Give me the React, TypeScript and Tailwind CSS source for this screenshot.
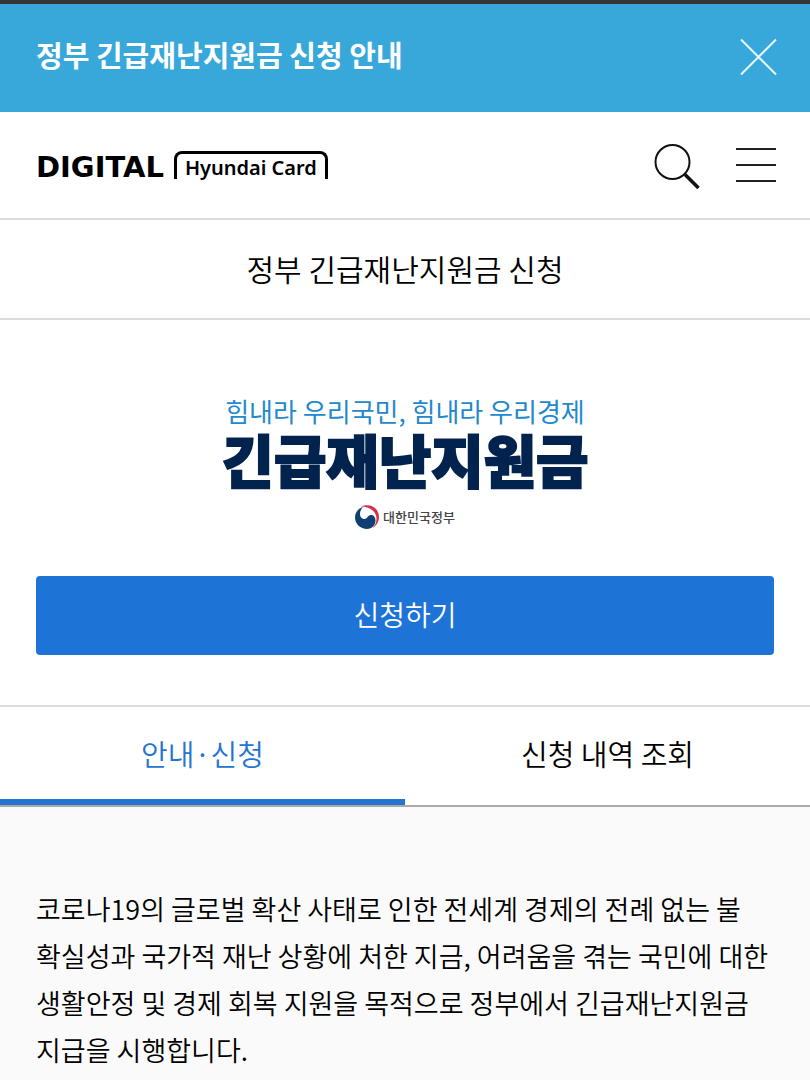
import React from 'react';

interface TabItem {
  label: string;
  href: string;
  active: boolean;
}

const tabs: TabItem[] = [
  { label: '안내·신청', href: '#guide', active: true },
  { label: '신청 내역 조회', href: '#history', active: false },
];

const NoticeBar: React.FC = () => (
  <div className="flex items-center justify-between h-28 pl-9 pr-8 pb-2 bg-[#38a8db] border-t-4 border-[#35363a]">
    <h2 className="text-[29px] leading-10 font-bold text-white">정부 긴급재난지원금 신청 안내</h2>
    <button type="button" aria-label="닫기" className="shrink-0 mt-1">
      <svg className="w-10 h-10" viewBox="0 0 40 40" fill="none" stroke="#e8f8ff" strokeWidth="2">
        <path d="M3 3.5 38 38.5M38 3.5 3 38.5" />
      </svg>
    </button>
  </div>
);

const SiteHeader: React.FC = () => (
  <header className="flex items-center justify-between h-27 px-9 border-b-2 border-[#dcdcdc]">
    <a href="#home" className="flex items-center gap-2.5 text-black">
      <span className="pt-1 font-['DejaVu_Sans',sans-serif] text-[29px] leading-8 font-bold">DIGITAL</span>
      <span className="h-7 px-2 border-3 border-b-0 border-black rounded-t-lg font-['Noto_Sans',sans-serif] text-[20px] leading-7 font-semibold whitespace-nowrap">
        Hyundai Card
      </span>
    </a>
    <div className="flex items-center gap-9 -mr-0.5">
      <button type="button" aria-label="검색">
        <svg className="w-12 h-12" viewBox="0 0 48 48" fill="none" stroke="#111">
          <circle cx="20.5" cy="21" r="17" strokeWidth="2" />
          <path d="M33 33.5 46.5 47" strokeWidth="3.5" />
        </svg>
      </button>
      <button type="button" aria-label="전체 메뉴">
        <svg className="w-10 h-10" viewBox="0 0 40 40" fill="none" stroke="#222" strokeWidth="2">
          <path d="M0 4h40M0 20h40M0 36h40" />
        </svg>
      </button>
    </div>
  </header>
);

const GovernmentMark: React.FC = () => (
  <svg className="w-6 h-6" viewBox="0 0 24 24">
    {/* red crescent, then the blue wave on top */}
    <path d="M6 1.5C15-2.5 24 3 24 12c0 5-3 9-6.500 11C20.500 20 21.500 17 21.500 13.500 21.500 7 15 1.500 6 1.500Z" fill="#d7304a" />
    <path d="M8 2C3 3.500 0 7.500 0 12.500 0 19 5.500 24 12 24c5 0 8.500-4 8.500-8.500 0-3.500-2-5.500-4.500-5.500-3.500 0-3.500 4-6.500 4S5 11.500 5 9c0-3 1.500-5.500 3-7Z" fill="#123f73" />
  </svg>
);

const Hero: React.FC = () => (
  <section className="flex flex-col items-center px-9 pt-[73px] pb-[50px]">
    <p className="text-[26px] leading-9 text-[#2389cc]">힘내라 우리국민, 힘내라 우리경제</p>
    <h2 className="text-[57px] leading-[58px] font-black text-[#03234f] [-webkit-text-stroke:2px_#03234f]">긴급재난지원금</h2>
    <div className="flex items-center gap-1 mt-[18px] text-[13px] leading-6 font-medium text-[#444]">
      <GovernmentMark />
      <span>대한민국정부</span>
    </div>
    <button type="button" className="w-full h-[79px] mt-[47px] pb-1 rounded-sm bg-[#1e74d6] text-[28px] leading-10 font-[350] text-white">
      신청하기
    </button>
  </section>
);

const Tabs: React.FC = () => (
  <nav className="flex border-t-2 border-t-[#dcdcdc] border-b-2 border-b-[#ababab] text-[29px] leading-10 font-[350]">
    {tabs.map((tab) => (
      <a
        key={tab.href}
        href={tab.href}
        className={`flex flex-1 items-center justify-center h-[98px] border-b-6 ${
          tab.active ? 'border-[#2475d2] text-[#2475d2]' : 'border-transparent text-black'
        }`}
      >
        {tab.label}
      </a>
    ))}
  </nav>
);

const App: React.FC = () => {
  return (
    <div className="flex flex-col min-h-screen bg-white font-['Noto_Sans_CJK_KR',sans-serif]">
      <NoticeBar />
      <SiteHeader />
      <h1 className="h-25 pt-7 border-b-2 border-[#dcdcdc] text-center text-[30px] leading-10 font-[350] text-black">
        정부 긴급재난지원금 신청
      </h1>
      <Hero />
      <Tabs />
      <main className="grow px-9 pt-[78px] bg-[#fafafa]">
        <p className="text-[27px] leading-[47px] font-[350] text-black">
          코로나19의 글로벌 확산 사태로 인한 전세계 경제의 전례 없는 불
          <br />
          확실성과 국가적 재난 상황에 처한 지금, 어려움을 겪는 국민에 대한
          <br />
          생활안정 및 경제 회복 지원을 목적으로 정부에서 긴급재난지원금
          <br />
          지급을 시행합니다.
        </p>
      </main>
    </div>
  );
};

export default App;
